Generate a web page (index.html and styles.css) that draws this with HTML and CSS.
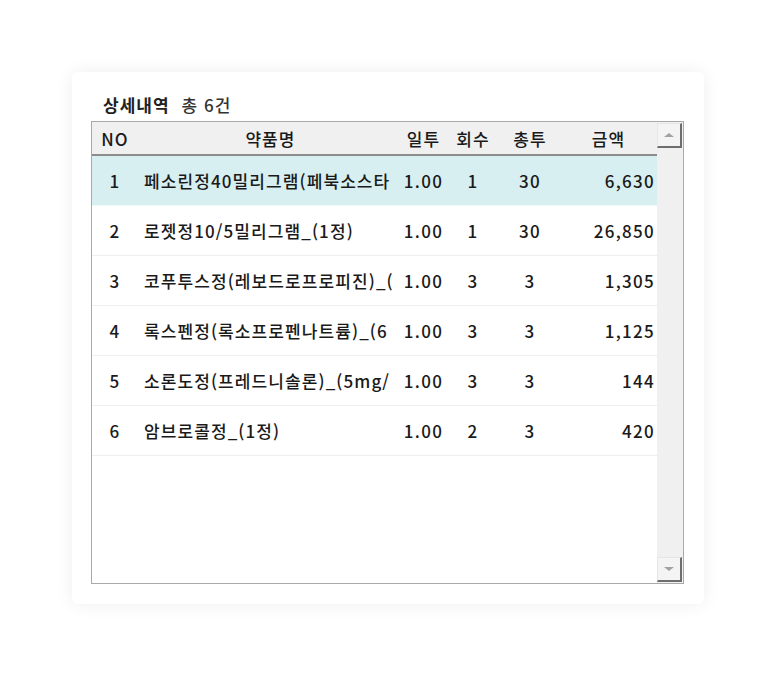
FILE: index.html
```html
<!DOCTYPE html>
<html lang="ko">
<head>
<meta charset="utf-8">
<link rel="stylesheet" href="styles.css">
</head>
<body>
<div class="card">
  <div class="title"><b>상세내역</b><span class="count">총 6건</span></div>
  <div class="box">
    <div class="list">
      <div class="row head">
        <div class="c no">NO</div>
        <div class="c name center">약품명</div>
        <div class="c day">일투</div>
        <div class="c times">회수</div>
        <div class="c total">총투</div>
        <div class="c amt center">금액</div>
      </div>
      <div class="row sel">
        <div class="c no">1</div>
        <div class="c name">페소린정40밀리그램(페북소스타</div>
        <div class="c day">1.00</div>
        <div class="c times">1</div>
        <div class="c total">30</div>
        <div class="c amt">6,630</div>
      </div>
      <div class="row">
        <div class="c no">2</div>
        <div class="c name">로젯정10/5밀리그램_(1정)</div>
        <div class="c day">1.00</div>
        <div class="c times">1</div>
        <div class="c total">30</div>
        <div class="c amt">26,850</div>
      </div>
      <div class="row">
        <div class="c no">3</div>
        <div class="c name">코푸투스정(레보드로프로피진)_(</div>
        <div class="c day">1.00</div>
        <div class="c times">3</div>
        <div class="c total">3</div>
        <div class="c amt">1,305</div>
      </div>
      <div class="row">
        <div class="c no">4</div>
        <div class="c name">록스펜정(록소프로펜나트륨)_(6</div>
        <div class="c day">1.00</div>
        <div class="c times">3</div>
        <div class="c total">3</div>
        <div class="c amt">1,125</div>
      </div>
      <div class="row">
        <div class="c no">5</div>
        <div class="c name">소론도정(프레드니솔론)_(5mg/</div>
        <div class="c day">1.00</div>
        <div class="c times">3</div>
        <div class="c total">3</div>
        <div class="c amt">144</div>
      </div>
      <div class="row">
        <div class="c no">6</div>
        <div class="c name">암브로콜정_(1정)</div>
        <div class="c day">1.00</div>
        <div class="c times">2</div>
        <div class="c total">3</div>
        <div class="c amt">420</div>
      </div>
    </div>
    <div class="scroll">
      <div class="btn"><span class="arrow up"></span></div>
      <div class="track"></div>
      <div class="btn"><span class="arrow down"></span></div>
    </div>
  </div>
</div>
</body>
</html>
```

FILE: styles.css
```css
html, body {
  margin: 0;
  padding: 0;
  background: #ffffff;
}
body {
  font-family: "Noto Sans CJK KR", "Noto Sans", sans-serif;
  color: #1a1a1a;
  padding: 72px 0 0 72px;
  height: 676px;
  box-sizing: border-box;
}
.card {
  width: 632px;
  height: 532px;
  box-sizing: border-box;
  background: #fff;
  border-radius: 6px;
  box-shadow: 0 0 18px rgba(0, 0, 0, 0.07);
  padding: 22px 20px 20px 19px;
  display: flex;
  flex-direction: column;
}
.title {
  height: 22px;
  line-height: 22px;
  font-size: 17px;
  padding-left: 12px;
  margin-bottom: 5px;
  letter-spacing: 1px;
}
.title b {
  font-weight: 700;
  color: #222;
}
.count {
  margin-left: 12px;
  color: #333;
  font-weight: 500;
}
.box {
  flex: 1;
  border: 1px solid #a9a9a9;
  display: flex;
  background: #fff;
}
.list {
  flex: 1;
  display: flex;
  flex-direction: column;
}
.row {
  display: grid;
  grid-template-columns: 45px 264px 45px 54px 60px 97px;
  height: 49px;
  border-bottom: 1px solid #eeeeee;
  font-size: 17px;
  font-weight: 500;
  letter-spacing: 1.3px;
  align-items: center;
}
.row.head {
  height: 32px;
  background: #f0f0f0;
  border-bottom: 2px solid #8c8c8c;
  letter-spacing: 1px;
}
.row.sel {
  background: #d8eff1;
  border-bottom-color: #f0f8f8;
}
.c {
  text-align: center;
  white-space: nowrap;
  overflow: hidden;
}
.c.no {
  padding-left: 1px;
}
.c.name {
  text-align: left;
  padding-left: 7px;
  padding-right: 4px;
  letter-spacing: 1.1px;
}
.c.name.center {
  text-align: center;
}
.c.amt {
  text-align: right;
  padding-right: 2px;
}
.c.amt.center {
  text-align: center;
  padding-right: 0;
}
.scroll {
  width: 26px;
  background: #f0f0f0;
  display: flex;
  flex-direction: column;
  padding: 1px 1px 1px 0;
}
.btn {
  width: 25px;
  height: 25px;
  box-sizing: border-box;
  background: #f4f4f4;
  border-top: 1px solid #e6e6e6;
  border-left: 1px solid #e6e6e6;
  border-right: 2px solid #6e6e6e;
  border-bottom: 2px solid #6e6e6e;
  display: flex;
  align-items: center;
  justify-content: center;
}
.track {
  flex: 1;
}
.arrow {
  width: 0;
  height: 0;
  border-left: 5px solid transparent;
  border-right: 5px solid transparent;
}
.arrow.up {
  border-bottom: 4px solid #a3a3a3;
}
.arrow.down {
  border-top: 4px solid #a3a3a3;
}
```
